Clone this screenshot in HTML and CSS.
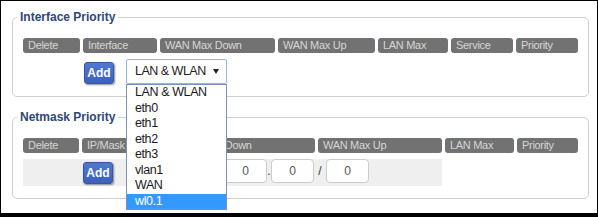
FILE: index.html
```html
<!DOCTYPE html>
<html lang="en">
<head>
    <meta charset="UTF-8">
    <title>QoS Priority</title>
    <link rel="stylesheet" href="styles.css">
</head>
<body>
    <div class="frame">
        <fieldset class="group">
            <legend>Interface Priority</legend>
            <div class="grid grid-iface">
                <div class="hd">Delete</div>
                <div class="hd">Interface</div>
                <div class="hd">WAN Max Down</div>
                <div class="hd">WAN Max Up</div>
                <div class="hd">LAN Max</div>
                <div class="hd">Service</div>
                <div class="hd">Priority</div>
            </div>
            <div class="edit-row edit-iface">
                <button class="btn-add">Add</button>
                <div class="select">
                    <span>LAN &amp; WLAN</span>
                    <span class="caret"></span>
                    <ul class="dropdown">
                        <li>LAN &amp; WLAN</li>
                        <li>eth0</li>
                        <li>eth1</li>
                        <li>eth2</li>
                        <li>eth3</li>
                        <li>vlan1</li>
                        <li>WAN</li>
                        <li class="on">wl0.1</li>
                    </ul>
                </div>
            </div>
        </fieldset>

        <fieldset class="group">
            <legend>Netmask Priority</legend>
            <div class="grid grid-mask">
                <div class="hd">Delete</div>
                <div class="hd">IP/Mask</div>
                <div class="hd">WAN Max Down</div>
                <div class="hd">WAN Max Up</div>
                <div class="hd">LAN Max</div>
                <div class="hd">Priority</div>
            </div>
            <div class="edit-row edit-mask">
                <button class="btn-add">Add</button>
                <div class="octet">0</div>
                <span class="sep">.</span>
                <div class="octet">0</div>
                <span class="sep">.</span>
                <div class="octet">0</div>
                <span class="sep">.</span>
                <div class="octet">0</div>
                <span class="sep sep-slash">/</span>
                <div class="octet">0</div>
            </div>
        </fieldset>

        <fieldset class="group">
            <legend>MAC Priority</legend>
        </fieldset>
    </div>
</body>
</html>
```

FILE: styles.css
```css
* {
    box-sizing: border-box;
}
body {
    margin: 0;
    background: #fff;
    font-family: "Liberation Sans", Arial, sans-serif;
}
.frame {
    width: 598px;
    height: 217px;
    border: 1px solid #000;
    border-bottom-width: 4px;
    padding-top: 9px;
    overflow: hidden;
}
.group {
    margin: 0 8px 13px 11px;
    padding: 14px 10px 12px;
    border: 1px solid #cfcfcf;
    border-radius: 5px;
    min-width: 0;
}
.group legend {
    margin-left: -6px;
    padding: 0 3px;
    font-size: 12px;
    line-height: 14px;
    font-weight: bold;
    color: #2f4779;
}
.grid {
    display: grid;
    column-gap: 3px;
}
.grid-iface {
    grid-template-columns: 57px 74px 115px 97px 70px 62px 62px;
}
.grid-mask {
    grid-template-columns: 56px 85px 145px 124px 69px 61px;
}
.hd {
    height: 15px;
    padding-left: 5px;
    background: #727272;
    color: #d6d6d6;
    font-size: 11px;
    line-height: 15px;
    letter-spacing: -0.3px;
    border-radius: 3px;
    white-space: nowrap;
    overflow: hidden;
}
.edit-row {
    display: flex;
    align-items: flex-start;
    margin-top: 6px;
}
.edit-iface {
    height: 25px;
    padding-left: 61px;
}
.edit-mask {
    width: 419px;
    height: 27px;
    padding-left: 60px;
    background: #efefef;
}
.btn-add {
    width: 30px;
    height: 22px;
    margin-top: 3px;
    padding: 0;
    border: 1px solid #3556a3;
    border-radius: 3px;
    background: linear-gradient(#5078d2, #3b61bd);
    color: #fff;
    font-family: "Liberation Sans", Arial, sans-serif;
    font-size: 12px;
    font-weight: bold;
    box-shadow: 1px 1px 2px rgba(0, 0, 0, 0.45);
}
.edit-mask .btn-add {
    margin-right: 17px;
}
.select {
    position: relative;
    width: 101px;
    height: 25px;
    margin-left: 12px;
    padding-left: 8px;
    border: 1px solid #94b6e2;
    border-radius: 2px;
    background: #fff;
    color: #222;
    font-size: 12.5px;
    line-height: 23px;
    letter-spacing: -0.5px;
}
.caret {
    position: absolute;
    right: 7px;
    top: 9px;
    border-left: 3.5px solid transparent;
    border-right: 3.5px solid transparent;
    border-top: 5px solid #222;
}
.dropdown {
    position: absolute;
    left: -1px;
    top: 24px;
    width: 101px;
    margin: 0;
    padding: 0;
    list-style: none;
    background: #fff;
    border: 1px solid #7d90b4;
    z-index: 5;
}
.dropdown li {
    height: 15.5px;
    padding-left: 8px;
    line-height: 15.5px;
    font-size: 12.5px;
    letter-spacing: -0.4px;
    color: #1a1a1a;
}
.dropdown li.on {
    background: #3399ff;
    color: #fff;
}
.octet {
    width: 43px;
    height: 24px;
    border: 1px solid #cccccc;
    border-radius: 4px;
    background: #fff;
    color: #555;
    font-size: 12px;
    line-height: 22px;
    text-align: center;
}
.sep {
    width: 4px;
    color: #333;
    font-size: 12px;
    line-height: 24px;
    text-align: center;
}
.sep-slash {
    width: 12px;
}
```
